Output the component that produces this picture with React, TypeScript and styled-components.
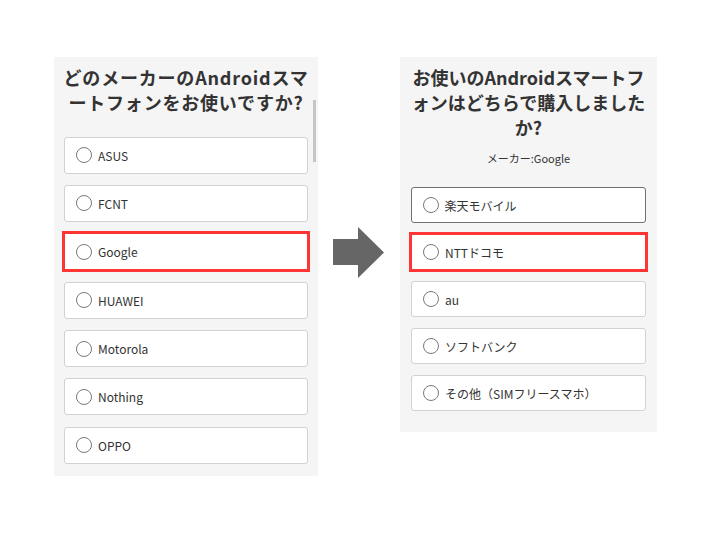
import React from "react";
import styled, { createGlobalStyle, css } from "styled-components";

const Global = createGlobalStyle`
  html, body { margin: 0; padding: 0; background: #fff; }
  body { font-family: "Noto Sans CJK JP", "Noto Sans", sans-serif; color: #333; }
`;

const Page = styled.div`
  width: 710px;
  height: 533px;
  box-sizing: border-box;
  padding: 57px 0 0 54px;
  display: flex;
  align-items: flex-start;
`;

const Panel = styled.div<{ $w: number; $h?: number; $pad: number }>`
  position: relative;
  width: ${(p) => p.$w}px;
  ${(p) => (p.$h ? `height: ${p.$h}px; overflow: hidden;` : "")}
  box-sizing: border-box;
  background: #f5f5f5;
  padding: 8px ${(p) => p.$pad}px 21px;
  display: flex;
  flex-direction: column;
`;

const Title = styled.h2<{ $ls?: number }>`
  margin: 0 -6px;
  font-size: 18px;
  line-height: 25px;
  font-weight: 700;
  text-align: center;
  white-space: nowrap;
  color: #333;
  letter-spacing: ${(p) => p.$ls ?? 0}px;
`;

const Maker = styled.p`
  margin: 10px 0 0;
  font-size: 11px;
  line-height: 16px;
  text-align: center;
  color: #333;
`;

const List = styled.div<{ $top: number; $gap: number }>`
  margin-top: ${(p) => p.$top}px;
  display: flex;
  flex-direction: column;
  gap: ${(p) => p.$gap}px;
`;

const Card = styled.div<{ $h: number; $focus?: boolean; $mark?: boolean }>`
  height: ${(p) => p.$h}px;
  flex-shrink: 0;
  box-sizing: border-box;
  background: #fff;
  border: 1px solid #d2d2d2;
  border-radius: 3px;
  display: flex;
  align-items: center;
  padding-left: 11px;
  gap: 6px;
  font-size: 12px;
  color: #333;
  ${(p) =>
    p.$focus &&
    css`
      border: 1.5px solid #707070;
      padding-left: 10.5px;
    `}
  ${(p) =>
    p.$mark &&
    css`
      outline: 3.5px solid #ff3434;
      outline-offset: -1.5px;
      border-radius: 0;
    `}
`;

const Radio = styled.span`
  width: 16px;
  height: 16px;
  box-sizing: border-box;
  border: 1px solid #7a7a7a;
  border-radius: 50%;
  flex-shrink: 0;
`;

const Scrollbar = styled.div`
  position: absolute;
  right: 2px;
  top: 43px;
  width: 3px;
  height: 62px;
  background: #c6c6c6;
`;

const ArrowBox = styled.div`
  margin: 170px 16px 0 15px;
  width: 51px;
  height: 51px;
  display: flex;
`;

const Arrow = () => (
  <svg width="51" height="51" viewBox="0 0 51 51">
    <polygon points="0,12 25,12 25,0 51,25.5 25,51 25,38 0,38" fill="#666" />
  </svg>
);

const makers = ["ASUS", "FCNT", "Google", "HUAWEI", "Motorola", "Nothing", "OPPO"];
const carriers = ["楽天モバイル", "NTTドコモ", "au", "ソフトバンク", "その他（SIMフリースマホ）"];

export default function App() {
  return (
    <>
      <Global />
      <Page>
        <Panel $w={264} $h={419} $pad={10}>
          <Title $ls={0.8}>
            どのメーカーのAndroidスマ
            <br />
            ートフォンをお使いですか?
          </Title>
          <List $top={21.5} $gap={11.4}>
            {makers.map((m) => (
              <Card key={m} $h={37} $mark={m === "Google"}>
                <Radio />
                {m}
              </Card>
            ))}
          </List>
          <Scrollbar />
        </Panel>
        <ArrowBox>
          <Arrow />
        </ArrowBox>
        <Panel $w={257} $pad={11}>
          <Title>
            お使いのAndroidスマートフ
            <br />
            ォンはどちらで購入しました
            <br />
            か?
          </Title>
          <Maker>メーカー:Google</Maker>
          <List $top={21} $gap={11}>
            {carriers.map((c, i) => (
              <Card key={c} $h={36} $focus={i === 0} $mark={i === 1}>
                <Radio />
                {c}
              </Card>
            ))}
          </List>
        </Panel>
      </Page>
    </>
  );
}
